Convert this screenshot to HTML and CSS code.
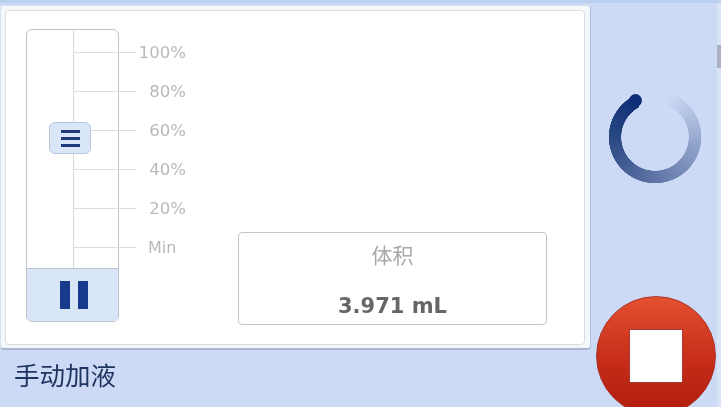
FILE: index.html
```html
<!DOCTYPE html>
<html lang="zh-CN">

<head>
	<meta charset="UTF-8">
	<meta name="viewport" content="width=device-width, initial-scale=1.0">
	<title>手动加液</title>
	<link rel="stylesheet" href="styles.css">
</head>

<body>
	<div class="screen">
		<div class="main">
			<div class="panel">
				<div class="panel-inner">
					<div class="gauge">
						<div class="track">
							<div class="rail"></div>
						</div>
						<div class="pause">
							<span class="pause-bar"></span>
							<span class="pause-bar"></span>
						</div>
						<ul class="ticks">
							<li><span class="tick"></span><span class="mark">100%</span></li>
							<li><span class="tick"></span><span class="mark">80%</span></li>
							<li><span class="tick"></span><span class="mark">60%</span></li>
							<li><span class="tick"></span><span class="mark">40%</span></li>
							<li><span class="tick"></span><span class="mark">20%</span></li>
							<li><span class="tick"></span><span class="mark mark-min">Min</span></li>
						</ul>
						<div class="thumb">
							<span class="thumb-line"></span>
							<span class="thumb-line"></span>
							<span class="thumb-line"></span>
						</div>
					</div>
					<div class="readout">
						<div class="readout-label">体积</div>
						<div class="readout-value">3.971 mL</div>
					</div>
				</div>
			</div>
			<div class="title">手动加液</div>
		</div>
		<div class="side">
			<div class="spinner">
				<div class="spinner-ring"></div>
				<div class="spinner-cap"></div>
			</div>
			<div class="stop">
				<div class="stop-square"></div>
			</div>
		</div>
		<div class="edge">
			<div class="edge-mark"></div>
		</div>
	</div>
</body>

</html>
```

FILE: styles.css
```css
* {
	box-sizing: border-box;
}

body,
ul {
	margin: 0;
}

ul {
	padding: 0;
	list-style: none;
}

body {
	height: 407px;
	overflow: hidden;
	background-color: #ccdaf5;
	font-family: "DejaVu Sans", "Noto Sans CJK SC", sans-serif;
}

.screen {
	display: flex;
	height: 407px;
	overflow: hidden;
	border-top: 3px solid #bccfee;
	filter: blur(0.5px);
}

.main {
	display: flex;
	flex-direction: column;
	width: 591px;
	padding-top: 2px;
}

/* panel */
.panel {
	height: 345px;
	padding: 4px 5px 3px 4px;
	background-color: #f4f7fc;
	border: 1px solid #b4c1d8;
	border-left-color: #d5deef;
	border-top-color: #d5deef;
	border-bottom: 2px solid #a9b6cd;
	border-radius: 0 4px 4px 4px;
}

.panel-inner {
	display: flex;
	height: 100%;
	padding-top: 18px;
	padding-left: 20px;
	background-color: #fff;
	border: 1px solid #dcdcdc;
	border-radius: 4px;
}

/* gauge */
.gauge {
	position: relative;
	display: flex;
	flex-direction: column;
	flex-shrink: 0;
	width: 93px;
	height: 293px;
	border: 1px solid #bcc3cf;
	border-radius: 6px;
}

.track {
	flex: 1;
}

.rail {
	width: 1px;
	height: 100%;
	margin-left: 46px;
	background-color: #d8d8d8;
}

.pause {
	display: flex;
	justify-content: center;
	gap: 8px;
	height: 53px;
	padding-top: 12px;
	padding-left: 3px;
	background-color: #d9e6f8;
	border-top: 1px solid #bcc3cf;
	border-radius: 0 0 5px 5px;
}

.pause-bar {
	width: 10px;
	height: 28px;
	background-color: #173a8c;
}

.ticks {
	position: absolute;
	top: 3px;
	left: 46px;
}

.ticks li {
	display: flex;
	align-items: center;
	height: 39px;
}

.tick {
	width: 63px;
	height: 1px;
	background-color: #dcdcdc;
}

.mark {
	width: 50px;
	font-size: 16.5px;
	text-align: right;
	color: #b9b9b9;
}

.mark-min {
	padding-left: 12px;
	font-size: 16px;
	text-align: left;
}

.thumb {
	position: absolute;
	top: 92px;
	left: 22px;
	display: flex;
	flex-direction: column;
	justify-content: center;
	align-items: center;
	gap: 4px;
	width: 42px;
	height: 32px;
	background-color: #d9e6f8;
	border: 1px solid #b7c5dc;
	border-radius: 6px;
}

.thumb-line {
	width: 19px;
	height: 3px;
	background-color: #1f3a7a;
}

/* readout */
.readout {
	align-self: flex-end;
	flex-shrink: 0;
	width: 309px;
	height: 93px;
	margin-bottom: 19px;
	margin-left: 119px;
	padding-top: 8px;
	text-align: center;
	border: 1px solid #c6c6ca;
	border-radius: 4px;
}

.readout-label {
	height: 30px;
	font-size: 21px;
	line-height: 30px;
	color: #a9a9a9;
}

.readout-value {
	margin-top: 21px;
	font-size: 21px;
	font-weight: bold;
	line-height: 28px;
	color: #666;
}

.title {
	flex: 1;
	padding: 6px 0 0 14px;
	font-family: "Noto Sans CJK SC", sans-serif;
	font-size: 25.5px;
	line-height: 36px;
	color: #1f3460;
}

/* right column */
.side {
	display: flex;
	flex: 1;
	flex-direction: column;
	align-items: center;
	padding-left: 2px;
}

.spinner {
	position: relative;
	flex-shrink: 0;
	width: 94px;
	height: 94px;
	margin-top: 87px;
}

.spinner-ring {
	width: 100%;
	height: 100%;
	border-radius: 50%;
	background: conic-gradient(from 20deg, rgba(15, 47, 120, 0) 0deg, rgba(60, 84, 140, 0.45) 90deg, rgba(60, 84, 140, 0.8) 170deg, #23437f 260deg, #0f2f78 313deg, rgba(15, 47, 120, 0) 313deg);
	-webkit-mask: radial-gradient(circle, transparent 33.5px, #000 34px, #000 46px, transparent 46.5px);
	mask: radial-gradient(circle, transparent 33.5px, #000 34px, #000 46px, transparent 46.5px);
}

.spinner-cap {
	position: absolute;
	top: 4px;
	left: 21px;
	width: 13px;
	height: 13px;
	background-color: #0f2f78;
	border-radius: 50%;
}

.stop {
	display: flex;
	flex-shrink: 0;
	justify-content: center;
	align-items: center;
	width: 120px;
	height: 120px;
	margin-top: 112px;
	margin-left: 2px;
	background: linear-gradient(#e5502f, #c22a17 60%, #b01c0e);
	border: 1px solid #a8352b;
	border-radius: 50%;
}

.stop-square {
	width: 52px;
	height: 52px;
	background-color: #fff;
	box-shadow: 0 0 0 1px #a53a30;
}

.edge {
	flex-shrink: 0;
	width: 4px;
	padding-top: 42px;
	background-color: #d9e3f6;
}

.edge-mark {
	height: 23px;
	background-color: #a9b0bf;
}
```
